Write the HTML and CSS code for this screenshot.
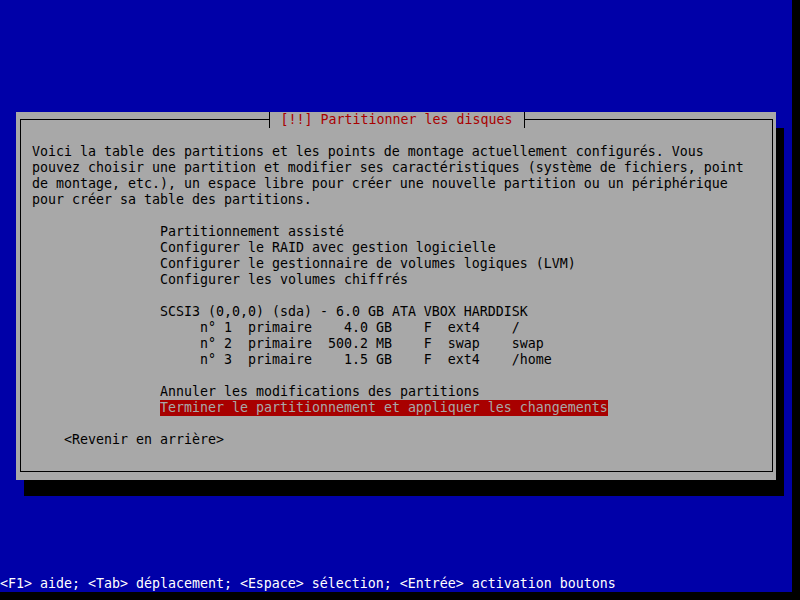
FILE: index.html
```html
<!DOCTYPE html>
<html lang="fr">
<head>
    <meta charset="UTF-8">
    <title>Partitionner les disques</title>
    <link rel="stylesheet" href="styles.css">
</head>
<body>
<div class="screen">
    <div class="dialog">
        <div class="frame">
            <div class="title">[!!] Partitionner les disques</div>
            <p class="intro">Voici la table des partitions et les points de montage actuellement configurés. Vous
pouvez choisir une partition et modifier ses caractéristiques (système de fichiers, point
de montage, etc.), un espace libre pour créer une nouvelle partition ou un périphérique
pour créer sa table des partitions.</p>
            <ul class="menu">
                <li>Partitionnement assisté</li>
                <li>Configurer le RAID avec gestion logicielle</li>
                <li>Configurer le gestionnaire de volumes logiques (LVM)</li>
                <li>Configurer les volumes chiffrés</li>
            </ul>
            <ul class="menu">
                <li>SCSI3 (0,0,0) (sda) - 6.0 GB ATA VBOX HARDDISK</li>
                <li>     n° 1  primaire    4.0 GB    F  ext4    /</li>
                <li>     n° 2  primaire  500.2 MB    F  swap    swap</li>
                <li>     n° 3  primaire    1.5 GB    F  ext4    /home</li>
            </ul>
            <ul class="menu">
                <li>Annuler les modifications des partitions</li>
                <li><span class="selected">Terminer le partitionnement et appliquer les changements</span></li>
            </ul>
            <div class="back">&lt;Revenir en arrière&gt;</div>
        </div>
    </div>
    <div class="status">&lt;F1&gt; aide; &lt;Tab&gt; déplacement; &lt;Espace&gt; sélection; &lt;Entrée&gt; activation boutons</div>
</div>
</body>
</html>
```
FILE: styles.css
```css
*{
    margin: 0;
    padding: 0;
    list-style: none;
}
body{
    background-color: #000;
}
.screen{
    width: 792px;
    height: 592px;
    background-color: #0000a8;
    display: flex;
    flex-direction: column;
    font-family: "DejaVu Sans Mono", "Liberation Mono", monospace;
    font-size: 13.29px;
    line-height: 16px;
    color: #000;
}
.intro,.menu li,.back,.status,.title{
    white-space: pre;
}
.dialog{
    width: 760px;
    height: 368px;
    margin: 112px 0 0 16px;
    background-color: #a8a8a8;
    box-shadow: 8px 16px 0 #000;
    display: flex;
}
.frame{
    flex: 1;
    margin: 7px 3px 8px 4px;
    border: 1px solid #000;
    padding: 24px 0 0 11px;
    position: relative;
}
.title{
    position: absolute;
    top: -8px;
    left: calc(50% - 128px);
    height: 16px;
    padding: 0 12px 0 11px;
    border-left: 1px solid #000;
    border-right: 1px solid #000;
    background-color: #a8a8a8;
    color: #a80000;
}
.menu{
    margin: 16px 0 0 128px;
}
.menu li{
    height: 16px;
}
.selected{
    display: inline-block;
    height: 16px;
    background-color: #a80000;
    color: #a8a8a8;
    vertical-align: top;
}
.back{
    margin: 16px 0 0 32px;
}
.status{
    margin-top: auto;
    color: #fff;
}
```
